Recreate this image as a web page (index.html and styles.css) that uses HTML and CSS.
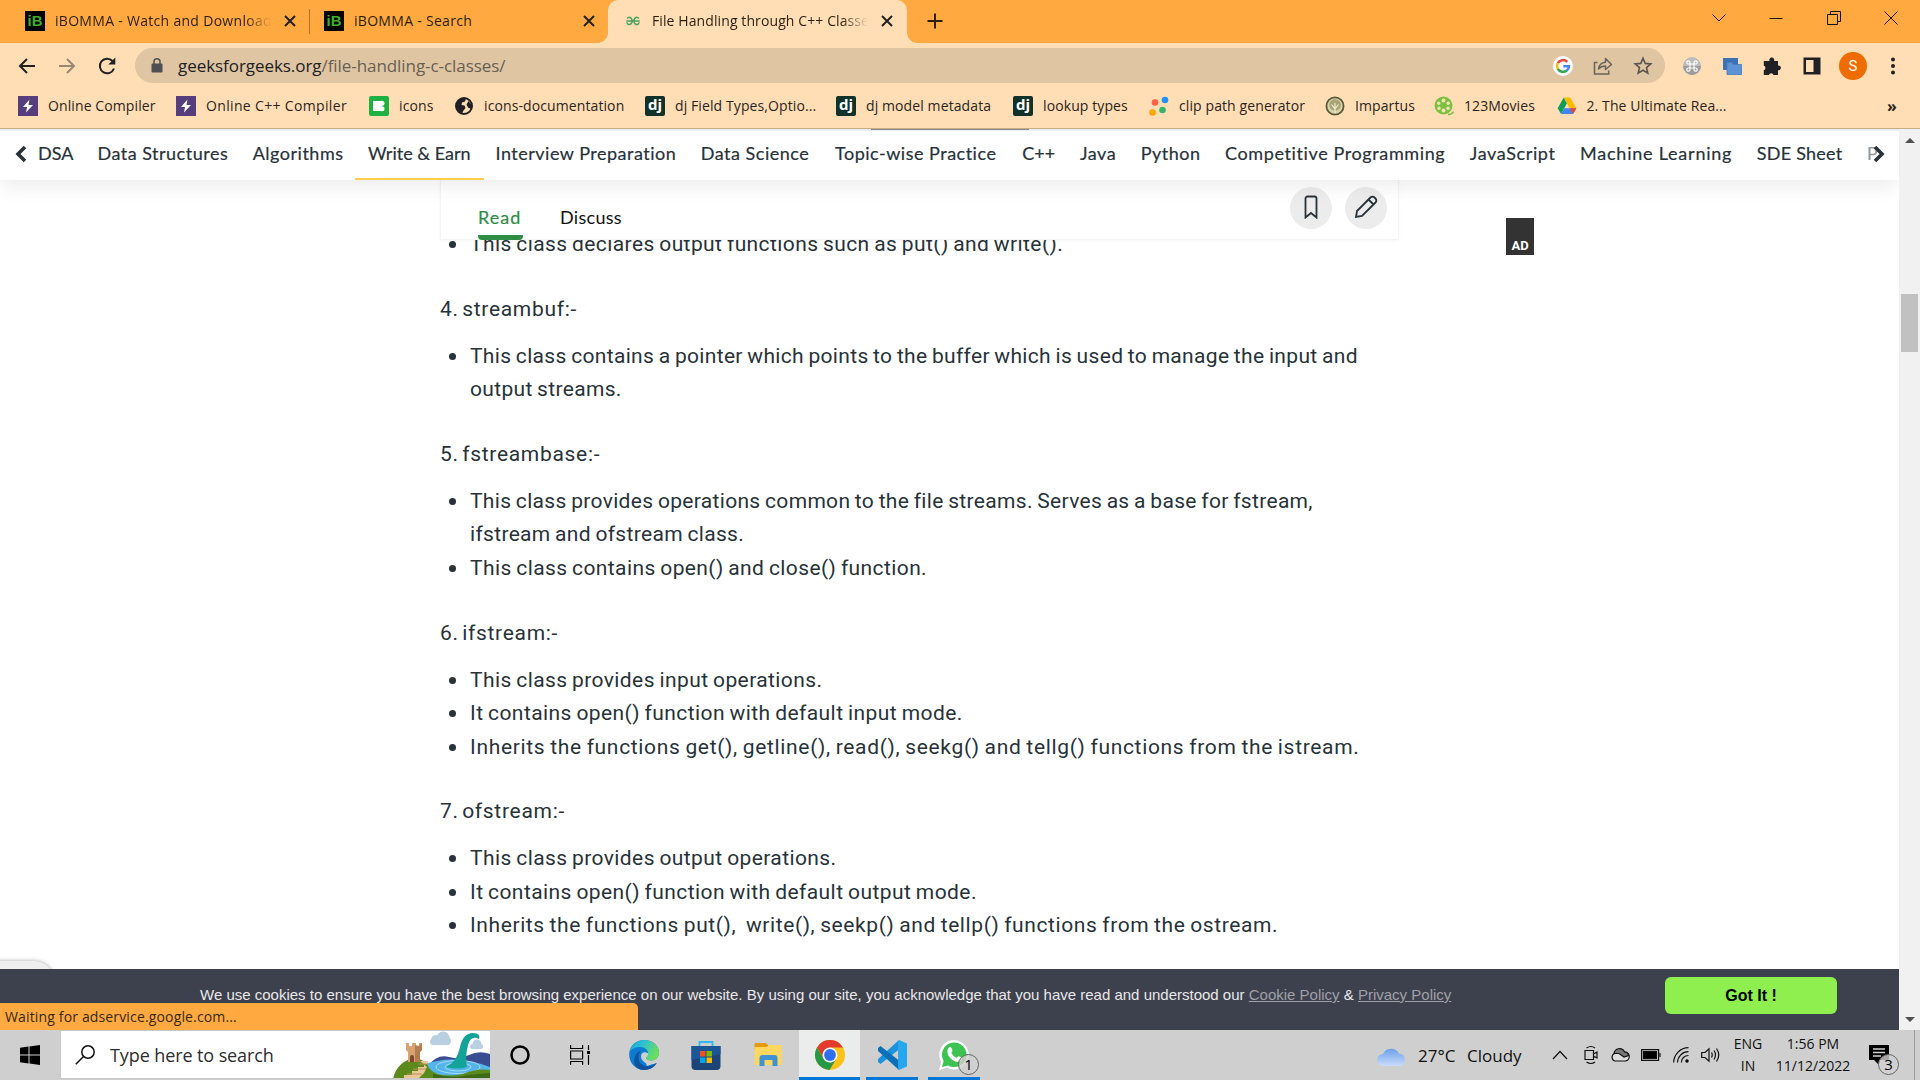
FILE: index.html
```html
<!DOCTYPE html>
<html lang="en">
<head>
<meta charset="utf-8">
<title>File Handling through C++ Classes</title>
<link rel="stylesheet" href="styles.css">
</head>
<body>
<div class="screen">

<header class="tabstrip">
  <div class="tab">
    <span class="ib-icon">iB</span><span class="tab-title fade">iBOMMA - Watch and Download</span>
    <svg class="close" viewBox="0 0 12 12"><path d="M1 1l10 10M11 1L1 11"/></svg>
  </div>
  <i class="tab-sep"></i>
  <div class="tab second">
    <span class="ib-icon">iB</span><span class="tab-title">iBOMMA - Search</span>
    <svg class="close" viewBox="0 0 12 12"><path d="M1 1l10 10M11 1L1 11"/></svg>
  </div>
  <div class="tab active">
    <svg class="gfg" viewBox="0 0 18 12"><path d="M1 6h16M2 3C3.500.8 7.600.8 8 6c-.3 5-5.800 5.500-6.300 1.500M16 3C14.500.8 10.400.8 10 6c.3 5 5.800 5.500 6.300 1.500"/></svg>
    <span class="tab-title fade">File Handling through C++ Classes</span>
    <svg class="close" viewBox="0 0 12 12"><path d="M1 1l10 10M11 1L1 11"/></svg>
  </div>
  <svg class="plus" viewBox="0 0 16 16"><path d="M8 .5v15M.5 8h15"/></svg>
  <div class="win-controls">
    <svg viewBox="0 0 14 14"><path d="M.5 3.500L7 10l6.500-6.500"/></svg>
    <svg viewBox="0 0 14 14"><path d="M.5 7.500h13"/></svg>
    <svg viewBox="0 0 14 14"><path d="M.5 3.500h10v10H.5zM3.500 3.500v-3h10v10h-3"/></svg>
    <svg viewBox="0 0 14 14"><path d="M.5.5l13 13M13.500.5L.5 13.500"/></svg>
  </div>
</header>

<div class="toolbar">
  <div class="nav-buttons">
    <svg viewBox="0 0 20 20"><path d="M18 10H3M10 3l-7 7 7 7"/></svg>
    <svg class="off" viewBox="0 0 20 20"><path d="M2 10h15M10 3l7 7-7 7"/></svg>
    <svg viewBox="0 0 20 20"><path d="M17 12.500A7.300 7.300 0 1 1 15.500 5"/><path d="M18.300 1.500v7h-7z" fill="#202124" stroke="none"/></svg>
  </div>
  <div class="omnibox">
    <svg class="lock" viewBox="0 0 12 15"><path d="M1.500 5.500h9A1 1 0 0 1 11.500 6.500v7a1 1 0 0 1-1 1h-9a1 1 0 0 1-1-1v-7a1 1 0 0 1 1-1z" fill="#4d4f53"/><path d="M3 6V3.800a3 3 0 0 1 6 0V6" fill="none" stroke="#4d4f53" stroke-width="1.500"/></svg>
    <span class="url">geeksforgeeks.org<em>/file-handling-c-classes/</em></span>
    <div class="omni-icons">
      <svg viewBox="0 0 20 20"><circle cx="10" cy="10" r="10" fill="#fff"/><g fill="none" stroke-width="2.500"><path d="M14.200 5.800A6 6 0 0 0 4.800 7.200" stroke="#ea4335"/><path d="M4.800 7.200a6 6 0 0 0 0 5.600" stroke="#fbbc05"/><path d="M4.800 12.800a6 6 0 0 0 9 1.700" stroke="#34a853"/><path d="M13.800 14.500A6 6 0 0 0 16 10.200H10.300" stroke="#4285f4"/></g></svg>
      <svg viewBox="0 0 20 20" fill="none" stroke="#68635c" stroke-width="1.500"><path d="M4.500 6.500H1.500V18h14.200v-3.500"/><path d="M5.500 13c.5-4.500 3-6.500 7-6.800V2.500L18.500 8.500l-6 5V10c-3.500 0-5.200.8-7 3z" stroke-linejoin="round"/></svg>
      <svg viewBox="0 0 20 20" fill="none" stroke="#5a5650" stroke-width="1.600"><path d="M10 2.200l2.200 5.200 5.600.5-4.300 3.700 1.300 5.500-4.800-2.900-4.800 2.900 1.300-5.500L2.200 7.900l5.600-.5z"/></svg>
    </div>
  </div>
  <div class="ext">
    <svg viewBox="0 0 20 20"><circle cx="10" cy="10" r="9" fill="#bcbcbc"/><path d="M1 10a9 9 0 0 0 18 0z" fill="#9c9c9c"/><path d="M8 8h4v4H8zM8 8H6.500A1.600 1.600 0 1 1 8 6.500zM12 8V6.500A1.600 1.600 0 1 1 13.500 8zM12 12h1.500a1.600 1.600 0 1 1-1.500 1.500zM8 12v1.500A1.600 1.600 0 1 1 6.500 12z" fill="none" stroke="#fff" stroke-width="1.200"/></svg>
    <svg viewBox="0 0 20 20"><path d="M1 2h15v12H1z" fill="#3c72b4"/><path d="M5 6.500h5l1 2h8.500v10H5z" fill="#5c93d2" stroke="#467bb8" stroke-width=".8"/></svg>
    <svg viewBox="0 0 20 20"><path d="M3 5h4.500a2.500 2.500 0 1 1 4.600 0H16v4.500a2.400 2.400 0 1 1 0 4.700V19h-4.500a2.400 2.400 0 0 0-4.600 0H1.800v-4.700a2.500 2.500 0 0 0 0-4.700V5z" fill="#202124"/></svg>
    <svg viewBox="0 0 20 20"><path d="M1.500 1.500h17v17H1.500z" fill="#202124"/><path d="M4 4h7.500v12H4z" fill="#ffdeb5"/></svg>
    <span class="avatar">S</span>
    <svg viewBox="0 0 20 20" fill="#202124"><circle cx="10" cy="3.500" r="2"/><circle cx="10" cy="10" r="2"/><circle cx="10" cy="16.500" r="2"/></svg>
  </div>
</div>

<div class="bookmarks">
  <span><svg viewBox="0 0 20 20"><path d="M0 0h20v20H0z" fill="#563d7c"/><path d="M11.500 3.500L5 11h4l-1 5.500L15 9h-4.500z" fill="#fff"/></svg>Online Compiler</span>
  <span class="wide"><svg viewBox="0 0 20 20"><path d="M0 0h20v20H0z" fill="#563d7c"/><path d="M11.500 3.500L5 11h4l-1 5.500L15 9h-4.500z" fill="#fff"/></svg>Online C++ Compiler</span>
  <span><svg viewBox="0 0 20 20"><rect width="20" height="20" rx="2" fill="#1fb141"/><path d="M4 5h6v10H4z" fill="#fff"/><circle cx="13" cy="7.300" r="2.500" fill="#fff"/><circle cx="13" cy="12.700" r="2.500" fill="#fff"/><path d="M9 5h4v10H9z" fill="#fff"/></svg>icons</span>
  <span><svg viewBox="0 0 20 20"><circle cx="10" cy="10" r="8" fill="#ffdeb5" stroke="#202124" stroke-width="2"/><path d="M2 9c2-6 7-7.500 10-6.500l-1 3-3 1-.5 2.500 3 .5 1 2.500-2 2.500-1.500 3C4 16 2 13 2 9zM14.500 5l3 4-.5 4-3-1.500-1.500-3z" fill="#202124"/></svg>icons-documentation</span>
  <span><b class="dj">dj</b>dj Field Types,Optio...</span>
  <span><b class="dj">dj</b>dj model metadata</span>
  <span><b class="dj">dj</b>lookup types</span>
  <span><svg viewBox="0 0 20 20"><circle cx="6" cy="6.500" r="3.300" fill="#ff6347"/><circle cx="16" cy="4" r="3.300" fill="#1e90ff"/><circle cx="3.500" cy="16.500" r="3.300" fill="#ffa500"/><circle cx="13.500" cy="14" r="3.300" fill="#3cb371"/></svg>clip path generator</span>
  <span><svg viewBox="0 0 20 20"><circle cx="10" cy="10" r="8.600" fill="#d9d3a6" stroke="#5c5a3c" stroke-width="1.800"/><circle cx="10" cy="9" r="5.800" fill="#a9a276"/><path d="M10 17V7M10 13L6.500 8.500M10 13l3.500-4.500" stroke="#f3efcf" stroke-width="1.200"/></svg>Impartus</span>
  <span><svg viewBox="0 0 20 20"><circle cx="9.500" cy="9.500" r="9" fill="#7ac142"/><g fill="#ffdeb5"><circle cx="9.500" cy="4.500" r="1.900"/><circle cx="9.500" cy="14.500" r="1.900"/><circle cx="4.800" cy="7.300" r="1.700"/><circle cx="14.200" cy="7.300" r="1.700"/><circle cx="5" cy="12.300" r="1.700"/><circle cx="14" cy="12.300" r="1.700"/></g><path d="M14 18.500q4 0 5.500-3" stroke="#7ac142" stroke-width="1.500" fill="none"/></svg>123Movies</span>
  <span><svg viewBox="0 0 20 20"><path d="M6.700 1.500L10 7.200 4 18 .7 12.300z" fill="#0f9d58"/><path d="M6.700 1.500h6.600l6 10.800h-6.600z" fill="#ffba00"/><path d="M4 18l3.300-5.700h12L16 18z" fill="#4285f4"/><path d="M12.700 12.300h6.600L16 18z" fill="#ea4335"/></svg>2. The Ultimate Rea...</span>
  <b class="more">»</b>
</div>

<div class="viewport">
  <main class="page">
    <nav class="topics">
      <svg class="chev" viewBox="0 0 12 18"><path d="M10 2L3 9l7 7"/></svg>
      <a class="t first">DSA</a><a>Data Structures</a><a>Algorithms</a><a class="t cur">Write &amp; Earn</a><a>Interview Preparation</a><a class="m">Data Science</a><a class="m">Topic-wise Practice</a><a class="t">C++</a><a>Java</a><a>Python</a><a class="w">Competitive Programming</a><a class="w">JavaScript</a><a class="x">Machine Learning</a><a class="s">SDE Sheet</a><a class="cut">P</a>
      <svg class="chev right" viewBox="0 0 12 18"><path d="M2 2l7 7-7 7"/></svg>
    </nav>
    <div class="band">
      <section class="sticky">
        <a class="on">Read</a><a>Discuss</a>
        <div class="round-buttons">
          <span><svg viewBox="0 0 24 24"><path d="M6.500 3.500a2 2 0 0 1 2-2h7a2 2 0 0 1 2 2v19L12 18l-5.500 4.500z"/></svg></span>
          <span><svg viewBox="0 0 24 24"><path d="M2 22l1-6L16.500 2.500a2.800 2.800 0 0 1 4 0l1 1a2.800 2.800 0 0 1 0 4L8 21zM14.500 4.500l5 5"/></svg></span>
        </div>
      </section>
      <span class="ad">AD</span>
    </div>
    <article>
      <ul><li><span class="s24">This class declares output functions such as put() and write().</span></li></ul>
      <p>4. streambuf:-</p>
      <ul><li><span>This class contains a pointer which points to the buffer which is used to manage the input and<br>output streams.</span></li></ul>
      <p>5. fstreambase:-</p>
      <ul>
        <li><span>This class provides operations common to the file streams. Serves as a base for fstream,<br>ifstream and ofstream class.</span></li>
        <li><span class="s24">This class contains open() and close() function.</span></li>
      </ul>
      <p>6. ifstream:-</p>
      <ul>
        <li><span class="s24">This class provides input operations.</span></li>
        <li><span class="s29">It contains open() function with default input mode.</span></li>
        <li><span class="s52">Inherits the functions get(), getline(), read(), seekg() and tellg() functions from the istream.</span></li>
      </ul>
      <p>7. ofstream:-</p>
      <ul>
        <li><span class="s24">This class provides output operations.</span></li>
        <li><span class="s29">It contains open() function with default output mode.</span></li>
        <li><span class="s46">Inherits the functions put(),&nbsp; write(), seekp() and tellp() functions from the ostream.</span></li>
      </ul>
    </article>
    <i class="peek"></i>
    <footer class="cookies">
      <p>We use cookies to ensure you have the best browsing experience on our website. By using our site, you acknowledge that you have read and understood our <u>Cookie Policy</u> &amp; <u>Privacy Policy</u></p>
      <button>Got It !</button>
    </footer>
    <div class="status">Waiting for adservice.google.com...</div>
    <i class="top-edge"></i>
  </main>
  <aside class="scroll"><i class="up"></i><i class="thumb"></i><i class="down"></i></aside>
</div>

<div class="taskbar">
  <div class="start"><svg width="20" height="20" viewBox="0 0 20 20"><path d="M0 2.800L8.500 1.600V9.500H0zM9.500 1.500L20 0v9.500H9.500zM0 10.500h8.500v8L0 17.300zM9.500 10.500H20V20L9.500 18.600z"/></svg></div>
  <div class="search">
    <svg class="glass" viewBox="0 0 20 20"><circle cx="13" cy="7" r="6.200"/><path d="M8.500 11.500L.8 19.300"/></svg>
    <span>Type here to search</span>
    <svg class="scene" viewBox="0 0 97 48">
      <g fill="#b9d0e2"><circle cx="43" cy="9" r="5"/><circle cx="50" cy="7" r="6.500"/><circle cx="54" cy="10" r="4"/><rect x="37" y="8" width="20" height="6" rx="3"/><circle cx="84" cy="13" r="4.500"/><rect x="77" y="13" width="13" height="5" rx="2.500"/></g>
      <path d="M36 34Q44 23 56 26Q66 29 76 24Q86 19 97 23v24H36z" fill="#3a4d93"/><path d="M30 34Q60 22 97 36v12H30z" fill="#55b4e8"/>
      <g fill="none" stroke="#a6dcf5"><ellipse cx="65" cy="36" rx="13" ry="4"/><ellipse cx="65" cy="36" rx="22" ry="6.500"/></g>
      <path d="M53 36Q64 31 67 16Q70 2 80 2q8 0 6 6-8-4-11 6-3 12-1 22-9 3-21 0z" fill="#14a398"/>
      <path d="M0 48Q4 30 22 27q12 2 14 10Q44 48 70 43q14-6 27-4v9z" fill="#5b8a1c"/><path d="M40 43q20 5 35 1l22-2v6H40z" fill="#3d6a17"/>
      <path d="M13 12h3v3h3v-3h4v3h3v-3h3v7l-2 2v10H15V21l-2-2z" fill="#d8a370"/><path d="M22 14l4 1 3-3v7l-2 2v10h-5z" fill="#b57c4f"/><path d="M17 31v-5a2 2 0 0 1 4 0v5z" fill="#7b4a30"/>
      <path d="M27 30h8v3h-4v3h-6v4h-6v4h-8v4h14l6-6 3-6z" fill="#e9c796"/><path d="M25 33h10M20 38h13M14 43h15" stroke="#b98e5b"/>
    </svg>
  </div>
  <div class="cell"><svg width="20" height="20" viewBox="0 0 20 20"><circle cx="10" cy="10" r="8.500" fill="none" stroke="#000" stroke-width="2.500"/></svg></div>
  <div class="cell"><svg width="20" height="20" viewBox="0 0 20 20"><path d="M.6 0v3.500h12V0M.6 20v-3.500h12V20M.6 6h12v8H.6zM18.500 0v5M18.500 10v10" fill="none" stroke="#000" stroke-width="1.200"/><path d="M17 6h3v3h-3z"/></svg></div>
  <div class="apps">
    <div><svg viewBox="0 0 30 30"><defs><linearGradient id="eg" x1="0" y1="0" x2="1" y2=".4"><stop stop-color="#1ba3e0"/><stop offset=".5" stop-color="#2fc3ce"/><stop offset="1" stop-color="#6adf5a"/></linearGradient></defs><path d="M.3 13C1 5 8 0 15 0c9 0 15 6 15 12.500 0 5-4 8-8 8-3 0-5-1-5-2.500s2-2 2-5l-5 3 4 10 9.800-3.200C25 28 20 30 15 30 6 30-.7 22 .3 13z" fill="#0c7bd0"/><path d="M.5 13C1 5 8 0 15 0c9 0 15 6 15 12.500 0 5-4 8-8 8-3 0-5-1-5-2.500s2-2 2-5c0-3-3-6-8-6S1 9.500.5 13z" fill="url(#eg)"/><path d="M12 11C8 15 8.500 24 16 26c5 1 9-1 11.800-3.200C25 28 20 30 15 30 8 30 3.500 25 5.500 18c1-4 3.500-6.500 6.500-7z" fill="#11529f"/><path d="M12.200 15c-1.200 5 4.300 9.500 10.300 9 3-.2 5-1.200 6-2-.6-.8-1-1-1.500-1.500-3 1.200-9 .5-10-1.800-.8-1.700 2-2 2-5-2.500-2.200-6-1.700-6.800 1.300z" fill="#cfcfcf"/></svg></div>
    <div><svg viewBox="0 0 30 30"><path d="M8.500 7V2h13v5" fill="none" stroke="#2cb8f5" stroke-width="1.800"/><path d="M.5 6h29v20a4 4 0 0 1-4 4h-21a4 4 0 0 1-4-4z" fill="#1c4476"/><path d="M.5 6h29v8l-29 6z" fill="#1b5797"/><path d="M9 11h5.500v5.500H9z" fill="#f25022"/><path d="M15.500 11H21v5.500h-5.500z" fill="#7fba00"/><path d="M9 17.500h5.500V23H9z" fill="#00a4ef"/><path d="M15.500 17.500H21V23h-5.500z" fill="#ffb900"/></svg></div>
    <div><svg viewBox="0 0 30 30"><path d="M1.500 4a1 1 0 0 1 1-1H13l2 2v5H1.500z" fill="#e29c0a"/><path d="M1.500 7H14l2-2h12.500v20h-27z" fill="#ffd65e"/><path d="M6.500 26V18a3 3 0 0 1 3-3h12a3 3 0 0 1 3 3v8h-5v-6h-8v6z" fill="#3f92d4"/></svg></div>
    <div class="run lit"><svg viewBox="0 0 30 30"><circle cx="15" cy="15" r="15" fill="#fbc116"/><path d="M15 7.500H28A15 15 0 0 0 2 7.500l6.500 11z" fill="#e33b2e"/><path d="M2 7.500A15 15 0 0 0 14.500 30l6.900-11.200-6.400 3.700-6.500-3.700z" fill="#279847"/><circle cx="15" cy="15" r="7.500" fill="#fff"/><circle cx="15" cy="15" r="5.900" fill="#2d6ff0"/></svg></div>
    <div class="run"><svg viewBox="0 0 30 30"><path d="M22 0L1 19v3l2.500 2L22 9.500z" fill="#1b94dc"/><path d="M22 30L1 11V8l2.500-2L22 20.500z" fill="#0b70b8"/><path d="M22 0l8 3.500v23L22 30l-1-2V2z" fill="#27a8ee"/></svg></div>
    <div class="run"><svg viewBox="0 0 30 30"><path d="M0 30l2.200-8A14.700 14.700 0 1 1 8 27.700z" fill="#fff"/><path d="M3 27l1.600-6A12.300 12.300 0 1 1 9 25.400z" fill="#3cc351"/><path d="M10 7.500c1-.8 2-.5 2.500.5l1 2.500c.3.800-1.300 1.800-1 2.500 1 2.300 3 4 5 4.700.8.3 1.500-1.800 2.300-1.500l2.800 1.400c.8.400.5 1.900-.5 3-3 3-9 .5-12-4-2.300-3.500-2-7.500-.1-9.100z" fill="#fff"/></svg><b class="badge">1</b></div>
  </div>
  <div class="tray">
    <svg class="cloud" viewBox="0 0 30 22"><defs><linearGradient id="cg" x1="0" y1="0" x2="0" y2="1"><stop stop-color="#6ea0ea"/><stop offset="1" stop-color="#c8dcfa"/></linearGradient></defs><path d="M6 21A6 6 0 0 1 6 9 9 9 0 0 1 22 8.500 6.500 6.500 0 0 1 24 21z" fill="url(#cg)"/></svg>
    <span class="temp">27°C</span><span class="cond">Cloudy</span>
    <svg class="i1" viewBox="0 0 16 10"><path d="M1 9l7-7.500L15 9"/></svg>
    <svg class="i2" viewBox="0 0 14 20"><path d="M1 5.500h8.500v9H1zM9.500 9l3.500-2v6l-3.500-2M2.500 3Q7 0 11 3M2.500 17Q7 20 11 17"/></svg>
    <svg class="i3" viewBox="0 0 20 14"><path d="M5 13A4 4 0 0 1 4.500 5.500 5.500 5.500 0 0 1 14.500 4 4.500 4.500 0 0 1 15 13z" fill="#dedede"/><path d="M4 5.500A5.500 5.500 0 0 1 14.500 4a4 4 0 0 1 4 3.500L14 9 9 5.500z" fill="#777"/></svg>
    <svg class="i4" viewBox="0 0 20 12"><path d="M.6.6h17v10.800H.6z"/><path d="M2.500 2.500h13v7h-13z" fill="#000"/><path d="M19 4v4"/></svg>
    <svg class="i5" viewBox="0 0 16 16"><path d="M.7 15.500A15 15 0 0 1 15.500.7M4.500 15.500A11 11 0 0 1 15.500 4.700M8.300 15.500A7 7 0 0 1 15.500 8.500"/><circle cx="14" cy="14" r="1.700" fill="#000" stroke="none"/></svg>
    <svg class="i6" viewBox="0 0 20 16"><path d="M.7 5.500H4L8 1.800v12.400L4 10.500H.7zM10.500 5.500q1.500 2.500 0 5M13 3.500q3 4.500 0 9M15.500 1.500q4.500 6.500 0 13"/></svg>
    <div class="lang">ENG<br>IN</div>
    <div class="clock">1:56 PM<br>11/12/2022</div>
    <div class="notif"><svg viewBox="0 0 20 20"><path d="M0 0h20v15H10v5l-5-5H0z"/><path d="M4 4h12M4 7.500h12M4 11h8" stroke="#cfcfcf" stroke-width="1.500"/></svg><b class="badge">3</b></div>
    <i class="peek-line"></i>
  </div>
</div>

</div>
</body>
</html>
```
FILE: styles.css
```css
* { box-sizing: border-box; }
body { margin: 0; font-family: "Open Sans", "Noto Sans", sans-serif; }
svg { display: block; flex: none; }
.screen { width: 1920px; height: 1080px; overflow: hidden; display: flex; flex-direction: column; background: #fff; white-space: nowrap; }

/* tab strip */
.tabstrip { height: 43px; flex: none; display: flex; background: #ffa940; padding-left: 10px; color: #2a1f12; }
.tab { width: 299px; height: 43px; padding: 0 13px 2px 15px; display: flex; align-items: center; font-size: 14px; letter-spacing: .3px; }
.tab.second { padding-right: 13px; padding-left: 14px; width: 298px; }
.tab-sep { width: 1px; height: 25px; margin-top: 9px; background: #a97331; }
.ib-icon { width: 20px; height: 20px; margin-right: 10px; background: #000; color: #3fae2a; font: bold 15px/20px "Liberation Sans", sans-serif; text-align: center; letter-spacing: 0; }
.tab-title { flex: 1; overflow: hidden; margin-right: 13px; line-height: 22px; }
.tab-title.fade { -webkit-mask-image: linear-gradient(90deg, #000 88%, transparent); mask-image: linear-gradient(90deg, #000 88%, transparent); }
.close { width: 12px; height: 12px; stroke: #202124; stroke-width: 2; fill: none; }
.tab.active { background: #ffdeb5; border-radius: 10px 10px 0 0; position: relative; padding-left: 16px; padding-right: 14px; letter-spacing: .1px; }
.tab.active::before, .tab.active::after { content: ""; position: absolute; bottom: 0; width: 10px; height: 10px; }
.tab.active::before { left: -10px; background: radial-gradient(circle at 0 0, #ffa940 9.5px, #ffdeb5 10px); }
.tab.active::after { right: -10px; background: radial-gradient(circle at 100% 0, #ffa940 9.5px, #ffdeb5 10px); }
.gfg { width: 18px; height: 10px; margin-right: 10px; fill: none; stroke: #48a35c; stroke-width: 1.8; }
.plus { width: 16px; height: 16px; margin: 13px 0 0 20px; stroke: #2a1f12; stroke-width: 2; }
.win-controls { margin: 11px 22px 0 auto; display: flex; gap: 43.5px; }
.win-controls svg { width: 14px; height: 14px; fill: none; stroke: #111; stroke-width: 1; }

/* toolbar */
.toolbar { height: 45px; flex: none; background: #ffdeb5; display: flex; align-items: center; }
.nav-buttons { display: flex; gap: 20px; margin-left: 17px; }
.nav-buttons svg { width: 20px; height: 20px; fill: none; stroke: #202124; stroke-width: 2; }
.nav-buttons .off { opacity: .45; }
.omnibox { width: 1530px; height: 35px; margin-left: 18px; border-radius: 18px; background: #dfc5a2; display: flex; align-items: center; padding: 0 12px 0 16px; }
.lock { width: 12px; height: 15px; }
.url { margin-left: 15px; font-size: 17px; letter-spacing: -.06px; color: #202124; line-height: 26px; }
.url em { font-style: normal; color: #685f54; }
.omni-icons { margin-left: auto; display: flex; gap: 20px; }
.omni-icons svg { width: 20px; height: 20px; }
.ext { display: flex; align-items: center; gap: 20px; margin-left: 17px; }
.ext svg { width: 20px; height: 20px; }
.ext svg:last-child { margin-left: -3px; }
.avatar { width: 28px; height: 28px; border-radius: 50%; background: #ee6c00; color: #fff; font: 15px/28px Roboto, sans-serif; text-align: center; margin: 0 -1px 0 -3px; }

/* bookmarks */
.bookmarks { height: 41px; flex: none; padding: 0 23px 5px 18px; background: #ffdeb5; border-bottom: 1px solid #c5ac8c; display: grid; grid-template-columns: 158px 193px 85px 191px 191px 177px 136px 176px 109px 122.5px 1fr auto; align-items: center; font-size: 14px; letter-spacing: .1px; color: #2a2420; }
.bookmarks span { display: flex; align-items: center; gap: 10px; }
.bookmarks .wide { letter-spacing: .34px; }
.bookmarks svg, .dj { width: 20px; height: 20px; }
.dj { background: #113228; border-radius: 2px; color: #fff; font: bold 15px/17px "Open Sans", sans-serif; text-align: center; letter-spacing: 0; }
.more { font-size: 16px; line-height: 20px; }

/* page viewport */
.viewport { height: 901px; flex: none; display: grid; grid-template-columns: 1899px 21px; }
.page { position: relative; height: 901px; overflow: hidden; display: flex; flex-direction: column; }
.topics { height: 51px; flex: none; position: relative; z-index: 3; background: #fff; border-top: 2px solid #eee; box-shadow: 0 6px 20px rgba(0,0,0,.08); display: flex; gap: 25px; padding: 0 0 0 15px; font: 18px/45px Lato, sans-serif; letter-spacing: .5px; color: #273239; -webkit-text-stroke: .2px #273239; }
.topics a { height: 49px; margin-right: -.5px; }
.topics .t { letter-spacing: 0; margin-right: 0; }
.topics .first { margin-right: -1px; }
.topics .m { margin-right: .8px; }
.topics .w { letter-spacing: .62px; }
.topics .x { letter-spacing: .77px; }
.topics .s { letter-spacing: .25px; }
.topics .cur { position: relative; }
.topics .cur::after { content: ""; position: absolute; left: -13px; right: -13px; bottom: 0; height: 2px; background: #ffce4a; }
.topics .cut { opacity: .5; }
.chev { width: 12px; height: 18px; margin: 14px -14px 0 0; fill: none; stroke: #273239; stroke-width: 3.6; }
.chev.right { margin-left: -30px; background: #fff; box-shadow: 4px 0 #fff; }
.band { height: 60px; flex: none; position: relative; z-index: 2; display: flex; padding-left: 440px; }
.sticky { width: 959px; height: 60px; background: #fff; border: 1px solid #f4f4f4; border-top: 0; box-shadow: 0 1px 3px rgba(0,0,0,.04); display: flex; padding-left: 37px; font: 18px/74px Lato, sans-serif; color: #111; letter-spacing: .3px; }
.sticky a { margin-right: 37px; height: 60px; }
.sticky .on { color: #2f8d46; letter-spacing: 1px; position: relative; width: 45px; -webkit-text-stroke: .2px #2f8d46; }
.sticky .on::after { content: ""; position: absolute; left: 0; bottom: 0; width: 45px; height: 5px; border-radius: 0 0 4px 4px; background: #2f8d46; }
.round-buttons { display: flex; gap: 13px; margin: 7px 11px 0 auto; }
.round-buttons span { width: 42px; height: 42px; border-radius: 50%; background: #ececec; display: grid; place-items: center; padding-bottom: 3px; }
.round-buttons svg { width: 24px; height: 24px; fill: none; stroke: #273239; stroke-width: 1.8; }
.ad { margin: 38px 0 0 107px; width: 28px; height: 37px; background: #333; color: #fff; font: bold 13px/56px Roboto, sans-serif; text-align: center; }
article { margin: -12px 0 0 440px; font: 21px/33.5px Roboto, sans-serif; color: #273239; letter-spacing: .32px; word-spacing: -1px; }
article ul { margin: 0; padding: 0 0 0 9px; list-style: none; }
article li { display: flex; gap: 14px; }
article li::before { content: ""; width: 7px; height: 7px; margin-top: 13px; border-radius: 50%; background: #273239; }
article p { margin: 31.2px 0 13.5px; letter-spacing: .7px; word-spacing: -2.5px; }
.s24 { letter-spacing: .4px; }
.s29 { letter-spacing: .42px; }
.s46 { letter-spacing: .6px; }
.s52 { letter-spacing: .67px; }
.peek { position: absolute; left: -20px; top: 832px; width: 74px; height: 40px; border-radius: 20px; background: #eee; box-shadow: 0 0 4px rgba(0,0,0,.35); }
.cookies { position: absolute; left: 0; right: 0; bottom: 0; height: 61px; background: #3d404d; display: flex; align-items: flex-start; padding: 8px 62px 0 200px; font: 15px/35px "Liberation Sans", Arial, sans-serif; color: #fff; }
.cookies p { margin: 0; color: #e8e8ea; }
.cookies u { color: #a0a0a8; }
.cookies button { margin-left: auto; width: 172px; height: 37px; border: 0; border-radius: 6px; background: #8eef4f; font: bold 16px "Liberation Sans", Arial, sans-serif; color: #000; }
.status { position: absolute; left: 0; bottom: 0; width: 638px; height: 27px; border-radius: 0 5px 0 0; background: #ffa940; padding-left: 5px; font-size: 14px; line-height: 27px; letter-spacing: .15px; color: #33291c; }
.top-edge { position: absolute; z-index: 4; left: 871px; top: 0; width: 158px; height: 1px; background: #8c8c8c; }
.scroll { background: #f1f1f1; position: relative; }
.scroll i { position: absolute; }
.thumb { left: 2px; top: 165px; width: 17px; height: 58px; background: #c1c1c1; }
.up, .down { left: 6px; border: 5px solid transparent; }
.up { top: 4px; border-bottom-color: #505050; }
.down { bottom: 3px; border-top-color: #505050; }

/* taskbar */
.taskbar { height: 50px; flex: none; background: #cfcfcf; display: grid; grid-template-columns: 60px 430px 60px 60px 371px 1fr; }
.start, .cell { display: grid; place-items: center; }
.search { background: #fff; border: 1px solid #c9c9c9; border-right: 0; height: 49px; display: flex; align-items: center; padding-left: 14px; font-size: 18px; letter-spacing: -.1px; color: #2d2d2d; overflow: hidden; }
.search span { margin-left: 15px; }
.glass { width: 20px; height: 20px; fill: none; stroke: #111; stroke-width: 1.5; }
.scene { width: 97px; height: 48px; margin-left: auto; }
.apps { display: flex; padding-left: 8px; }
.apps div { width: 52px; margin-right: 10px; display: grid; place-items: center; position: relative; flex: none; }
.apps svg { width: 30px; height: 30px; }
.apps .run { border-bottom: 3px solid #0078d7; padding-top: 3px; }
.apps .lit { width: 61px; margin: 0 6px 0 -5px; background: #ebecec; }
.badge { position: absolute; width: 21px; height: 21px; border-radius: 50%; border: 1px solid #666; background: #d0d0d0cc; color: #000; font: 15px/19px "Open Sans", sans-serif; text-align: center; }
.apps .badge { left: 30px; top: 24px; }
.tray { position: relative; display: flex; align-items: center; font-size: 17px; color: #111; padding-left: 396px; }
.tray svg { fill: none; stroke: #111; stroke-width: 1.2; }
.tray .cloud { width: 30px; height: 22px; stroke: none; margin-top: 2px; }
.temp { width: 49px; margin-left: 11px; }
.cond { width: 55px; }
.i1 { width: 16px; height: 10px; margin-left: 30px; }
.i2 { width: 14px; height: 20px; margin-left: 16px; }
.i3 { width: 20px; height: 14px; margin-left: 12px; }
.i4 { width: 20px; height: 12px; margin-left: 11px; }
.i5 { width: 16px; height: 16px; margin-left: 12px; }
.i6 { width: 20px; height: 16px; margin-left: 12px; }
.lang, .clock { font-size: 14px; line-height: 22px; text-align: center; }
.lang { width: 34px; margin-left: 10px; }
.clock { width: 80px; margin-left: 8px; }
.notif { margin-left: 16px; width: 20px; height: 20px; position: relative; flex: none; }
.tray .notif svg { width: 20px; height: 20px; fill: #000; stroke: none; }
.notif .badge { left: 9px; top: 9px; }
.peek-line { width: 1px; height: 50px; margin-left: 25px; background: #999; }
```
